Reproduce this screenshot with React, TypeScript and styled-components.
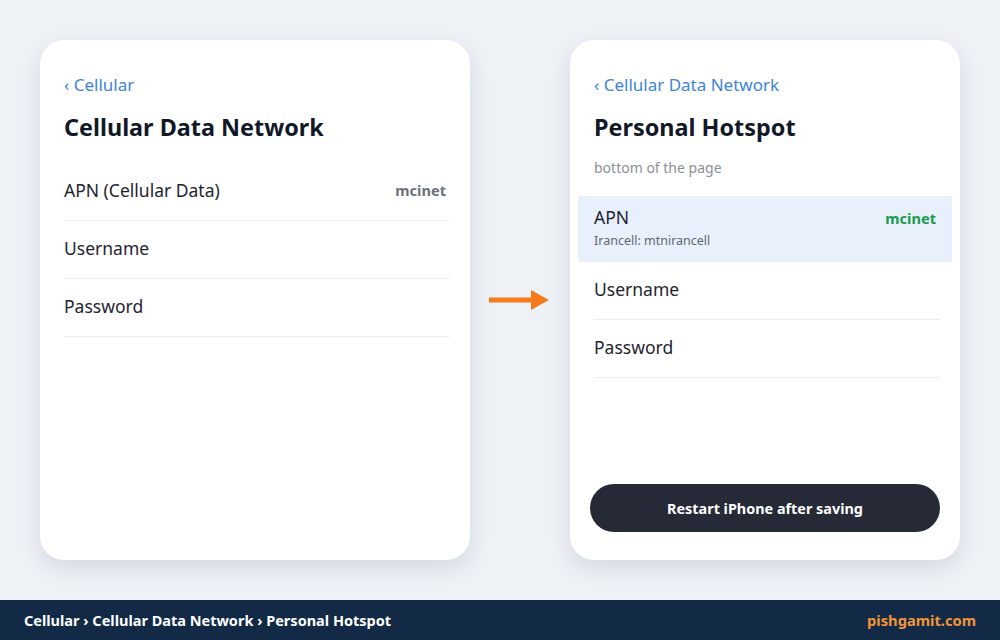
import React from "react";
import styled, { createGlobalStyle } from "styled-components";

const GlobalStyle = createGlobalStyle`
  html, body {
    margin: 0;
    padding: 0;
    background: #eef1f6;
    font-family: "Noto Sans", "Open Sans", "DejaVu Sans", sans-serif;
  }
  * { box-sizing: border-box; }
`;

const Page = styled.div`
  width: 1000px;
  height: 640px;
  display: flex;
  flex-direction: column;
  background: #eef1f6;
`;

const Stage = styled.main`
  flex: 1;
  display: flex;
  align-items: flex-start;
  padding: 40px 40px 0 40px;
`;

const Card = styled.section<{ $width: number }>`
  width: ${({ $width }) => $width}px;
  height: 520px;
  background: #ffffff;
  border-radius: 24px;
  box-shadow: 0 8px 22px rgba(30, 45, 80, 0.12);
  padding: 32px 20px 28px 24px;
  display: flex;
  flex-direction: column;
`;

const BackLink = styled.a`
  color: #3d85d8;
  font-size: 17px;
  line-height: 26px;
  text-decoration: none;
`;

const Title = styled.h1`
  margin: 13px 0 0 0;
  font-size: 23.4px;
  line-height: 32px;
  font-weight: 700;
  color: #111827;
`;

const Subtitle = styled.p`
  margin: 15px 0 0 0;
  font-size: 14px;
  line-height: 20px;
  color: #8a9099;
`;

const List = styled.div<{ $top: number }>`
  margin-top: ${({ $top }) => $top}px;
  display: flex;
  flex-direction: column;
`;

const Row = styled.div`
  height: 58px;
  display: flex;
  align-items: center;
  justify-content: space-between;
  padding: 0 4px 4px 0;
  border-bottom: 1px solid #eceef2;
`;

const HighlightRow = styled.div`
  margin: 0 -12px 0 -16px;
  height: 66px;
  padding: 9px 16px 0 16px;
  background: #e8f0fc;
  display: flex;
  align-items: flex-start;
  justify-content: space-between;
`;

const Label = styled.span`
  font-size: 17.5px;
  line-height: 24px;
  color: #1f2530;
`;

const SubLabel = styled.div`
  font-size: 12.5px;
  line-height: 18px;
  color: #5f6672;
  margin-top: 3px;
`;

const Value = styled.span<{ $tone: "muted" | "green" }>`
  font-size: 14.6px;
  font-weight: 700;
  line-height: 24px;
  color: ${({ $tone }) => ($tone === "green" ? "#1c9a4f" : "#6b7079")};
  margin-top: ${({ $tone }) => ($tone === "green" ? "1px" : "0")};
`;

const ArrowSlot = styled.div`
  width: 100px;
  height: 520px;
  display: flex;
  align-items: center;
  justify-content: center;
`;

const Spacer = styled.div`
  flex: 1;
`;

const PrimaryButton = styled.button`
  margin: 0 0 0 -4px;
  height: 48px;
  border: none;
  border-radius: 24px;
  background: #252a36;
  color: #ffffff;
  font-family: inherit;
  font-size: 14.4px;
  font-weight: 700;
  cursor: pointer;
`;

const Footer = styled.footer`
  height: 40px;
  background: #122a45;
  display: flex;
  align-items: center;
  justify-content: space-between;
  padding: 0 24px;
`;

const Crumbs = styled.span`
  color: #ffffff;
  font-size: 14.5px;
  font-weight: 700;
`;

const Brand = styled.span`
  color: #f0953a;
  font-size: 14.7px;
  font-weight: 700;
`;

const Arrow = () => (
  <svg width="62" height="22" viewBox="0 0 62 22">
    <rect x="0" y="8.5" width="44" height="5" fill="#f47c1d" />
    <polygon points="42,1 60,11 42,21" fill="#f47c1d" />
  </svg>
);

export default function App() {
  return (
    <Page>
      <GlobalStyle />
      <Stage>
        <Card $width={430}>
          <BackLink>‹ Cellular</BackLink>
          <Title>Cellular Data Network</Title>
          <List $top={20}>
            <Row>
              <Label>APN (Cellular Data)</Label>
              <Value $tone="muted">mcinet</Value>
            </Row>
            <Row>
              <Label>Username</Label>
            </Row>
            <Row>
              <Label>Password</Label>
            </Row>
          </List>
        </Card>
        <ArrowSlot>
          <Arrow />
        </ArrowSlot>
        <Card $width={390}>
          <BackLink>‹ Cellular Data Network</BackLink>
          <Title>Personal Hotspot</Title>
          <Subtitle>bottom of the page</Subtitle>
          <List $top={18}>
            <HighlightRow>
              <div>
                <Label>APN</Label>
                <SubLabel>Irancell: mtnirancell</SubLabel>
              </div>
              <Value $tone="green">mcinet</Value>
            </HighlightRow>
            <Row>
              <Label>Username</Label>
            </Row>
            <Row>
              <Label>Password</Label>
            </Row>
          </List>
          <Spacer />
          <PrimaryButton>Restart iPhone after saving</PrimaryButton>
        </Card>
      </Stage>
      <Footer>
        <Crumbs>Cellular › Cellular Data Network › Personal Hotspot</Crumbs>
        <Brand>pishgamit.com</Brand>
      </Footer>
    </Page>
  );
}
